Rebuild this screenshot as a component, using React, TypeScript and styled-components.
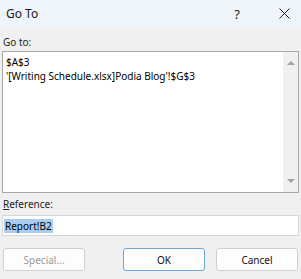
import React from "react";
import styled, { createGlobalStyle } from "styled-components";

const Global = createGlobalStyle`
  html, body { margin: 0; padding: 0; background: #f0f0f0; }
  body { font-family: "Noto Sans", "Open Sans", sans-serif; }
`;

const Dialog = styled.div`
  width: 301px;
  height: 279px;
  background: #f0f0f0;
  display: flex;
  flex-direction: column;
  color: #000;
  overflow: hidden;
`;

const TitleBar = styled.div`
  height: 27px;
  background: #eef4f9;
  display: flex;
  align-items: center;
  padding-left: 6px;
`;

const Title = styled.div`
  flex: 1;
  font-size: 12px;
  color: #1a1a1a;
`;

const TitleButton = styled.div<{ $w: number }>`
  width: ${(p) => p.$w}px;
  height: 27px;
  display: flex;
  align-items: center;
  justify-content: center;
  font-size: 13px;
  color: #222;
`;

const Body = styled.div`
  flex: 1;
  display: flex;
  flex-direction: column;
  padding: 0 2px 0 2px;
`;

const Label = styled.div<{ $top: number }>`
  font-size: 10px;
  color: #222;
  margin-top: ${(p) => p.$top}px;
  padding-left: 1px;
  line-height: 13px;
  height: 13px;
`;

const ListBox = styled.div`
  margin-top: 2px;
  height: 142px;
  border: 1px solid #a8a8a8;
  background: #fff;
  display: flex;
  box-sizing: border-box;
`;

const ListItems = styled.div`
  flex: 1;
  padding: 3px 0 0 3px;
  font-size: 10px;
  line-height: 14px;
  white-space: nowrap;
`;

const Scroll = styled.div`
  width: 15px;
  background: #f0f0f0;
  display: flex;
  flex-direction: column;
  justify-content: space-between;
  align-items: center;
  padding: 9px 0 9px;
`;

const Arrow = styled.div<{ $down?: boolean }>`
  width: 0;
  height: 0;
  border-left: 4px solid transparent;
  border-right: 4px solid transparent;
  ${(p) =>
    p.$down
      ? "border-top: 4px solid #a3a3a3;"
      : "border-bottom: 4px solid #a3a3a3;"}
`;

const Input = styled.div`
  margin-top: 4px;
  height: 21px;
  box-sizing: border-box;
  border: 1px solid #d6d6d6;
  background: #fff;
  display: flex;
  align-items: center;
  padding-left: 1px;
`;

const Selected = styled.span`
  background: #a9cdf1;
  font-size: 10px;
  line-height: 14px;
  padding: 0 1px;
`;

const Buttons = styled.div`
  margin-top: 12px;
  display: flex;
  padding-left: 1px;
`;

const Button = styled.div<{ $primary?: boolean; $disabled?: boolean; $gap: number }>`
  width: 82px;
  height: 23px;
  box-sizing: border-box;
  margin-left: ${(p) => p.$gap}px;
  border: 1px solid ${(p) => (p.$primary ? "#6aa5dc" : "#d0d0d0")};
  border-radius: 3px;
  background: #fdfdfd;
  display: flex;
  align-items: center;
  justify-content: center;
  font-size: 10px;
  color: ${(p) => (p.$disabled ? "#9a9a9a" : "#111")};
`;

export default function App() {
  return (
    <Dialog>
      <Global />
      <TitleBar>
        <Title>Go To</Title>
        <TitleButton $w={60}>?</TitleButton>
        <TitleButton $w={34}>
          <svg width="11" height="11" viewBox="0 0 11 11">
            <path d="M0.5 0.5 L10.5 10.5 M10.5 0.5 L0.5 10.5" stroke="#222" strokeWidth="1" />
          </svg>
        </TitleButton>
      </TitleBar>
      <Body>
        <Label $top={9}>Go to:</Label>
        <ListBox>
          <ListItems>
            <div>$A$3</div>
            <div>'[Writing Schedule.xlsx]Podia Blog'!$G$3</div>
          </ListItems>
          <Scroll>
            <Arrow />
            <Arrow $down />
          </Scroll>
        </ListBox>
        <Label $top={5}>
          <u>R</u>eference:
        </Label>
        <Input>
          <Selected>Report!B2</Selected>
        </Input>
        <Buttons>
          <Button $disabled $gap={0}>Special...</Button>
          <Button $primary $gap={38}>OK</Button>
          <Button $gap={11}>Cancel</Button>
        </Buttons>
      </Body>
    </Dialog>
  );
}
